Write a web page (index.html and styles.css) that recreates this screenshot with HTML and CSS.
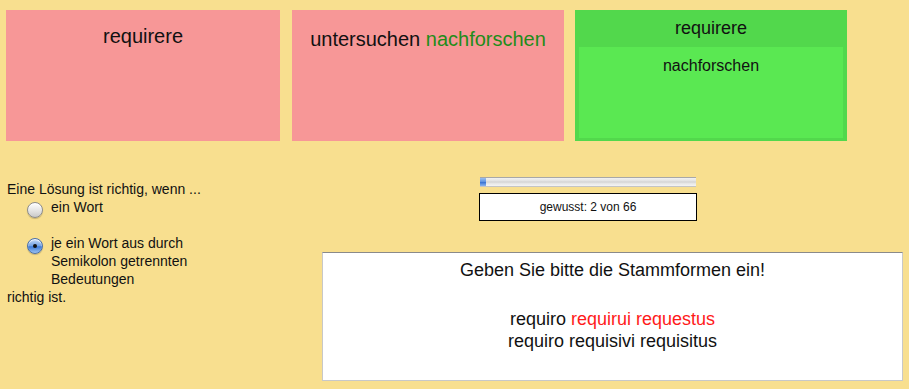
FILE: index.html
```html
<!DOCTYPE html>
<html lang="de">
<head>
    <meta charset="UTF-8">
    <meta name="viewport" content="width=device-width, initial-scale=1.0">
    <title>Stammformen üben</title>
    <link rel="stylesheet" href="styles.css">
</head>
<body>
    <div class="page">
        <div class="cards">
            <div class="card card-wrong">
                <div class="card-word">requirere</div>
            </div>
            <div class="card card-wrong card-answer">
                <div class="card-word">untersuchen <span class="right-word">nachforschen</span></div>
            </div>
            <div class="card card-solution">
                <div class="solution-head">requirere</div>
                <div class="solution-body">nachforschen</div>
            </div>
        </div>

        <div class="lower">
            <div class="options">
                <div class="options-title">Eine Lösung ist richtig, wenn ...</div>
                <label class="option">
                    <input type="radio" name="mode" class="radio">
                    <span class="option-text">ein Wort</span>
                </label>
                <label class="option">
                    <input type="radio" name="mode" class="radio" checked>
                    <span class="option-text">je ein Wort aus durch Semikolon getrennten Bedeutungen</span>
                </label>
                <div class="options-end">richtig ist.</div>
            </div>

            <div class="side">
                <div class="meter">
                    <div class="progress">
                        <div class="progress-fill" style="width: 3%"></div>
                    </div>
                    <div class="counter">gewusst: 2 von 66</div>
                </div>
                <div class="result">
                    <div class="result-title">Geben Sie bitte die Stammformen ein!</div>
                    <div class="result-line">requiro <span class="wrong">requirui requestus</span></div>
                    <div class="result-line">requiro requisivi requisitus</div>
                </div>
            </div>
        </div>
    </div>
</body>
</html>
```

FILE: styles.css
```css
body {
    margin: 0;
    background-color: #f8df8f;
    font-family: "Liberation Sans", Arial, sans-serif;
    color: #111;
}
.page {
    padding: 10px 6px;
}
.cards {
    display: flex;
}
.card {
    height: 131px;
    box-sizing: border-box;
    text-align: center;
}
.card-wrong {
    background-color: #f79797;
    width: 274px;
    padding-top: 15px;
}
.card-answer {
    width: 272px;
    margin-left: 12px;
    padding-top: 18px;
}
.card-word {
    font-size: 20px;
    line-height: 23px;
}
.right-word {
    color: #1f8c1a;
}
.card-solution {
    width: 272px;
    margin-left: 11px;
    background-color: #52d84c;
    padding: 0 4px 3px;
    display: flex;
    flex-direction: column;
}
.solution-head {
    height: 37px;
    box-sizing: border-box;
    padding-top: 8px;
    font-size: 18px;
    line-height: 21px;
}
.solution-body {
    flex: 1;
    background-color: #5ae852;
    padding-top: 9px;
    font-size: 16px;
    line-height: 19px;
}
.lower {
    display: flex;
    margin-top: 36px;
}
.options {
    width: 315px;
    padding: 3px 0 0 1px;
    font-size: 14px;
    line-height: 18px;
}
.option {
    display: flex;
    align-items: flex-start;
    margin-top: 0;
    margin-bottom: 16px;
}
.option:last-of-type {
    margin-bottom: 0;
}
.radio {
    appearance: none;
    -webkit-appearance: none;
    width: 16px;
    height: 16px;
    margin: 4px 8px 0 20px;
    border-radius: 50%;
    border: 1px solid #8c8c8c;
    box-sizing: border-box;
    background: linear-gradient(#ffffff, #e4e4e4 55%, #c9c9c9);
    box-shadow: inset 0 1px 1px rgba(255, 255, 255, 0.9), 0 1px 1px rgba(0, 0, 0, 0.2);
    position: relative;
}
.radio:checked {
    border-color: #4a6fa8;
    background: linear-gradient(#c8dcf6, #6f9fe4 50%, #3b79d6 55%, #9ec4f2);
}
.radio:checked::after {
    content: "";
    position: absolute;
    left: 5px;
    top: 5px;
    width: 4px;
    height: 4px;
    border-radius: 50%;
    background: #111;
}
.option-text {
    max-width: 185px;
}
.side {
    flex: 1;
}
.meter {
    margin-left: 157px;
    width: 218px;
}
.progress {
    margin-left: 1px;
    width: 216px;
    height: 10px;
    box-sizing: border-box;
    border-top: 1px solid #a8a8a8;
    border-bottom: 1px solid #c4c4c4;
    background: linear-gradient(#f2f2f2, #e6e6e6 30%, #d4d4d4 50%, #e8e8e8 70%, #f4f4f4);
}
.progress-fill {
    height: 100%;
    background: linear-gradient(#9cc0f0, #5a8fe0 50%, #3b74d4 55%, #8ab4ee);
}
.counter {
    margin-top: 6px;
    height: 28px;
    box-sizing: border-box;
    border: 1px solid #000;
    background: #fff;
    font-size: 12px;
    line-height: 26px;
    text-align: center;
}
.result {
    margin-top: 31px;
    width: 581px;
    height: 129px;
    box-sizing: border-box;
    background: #fff;
    border: 1px solid #c8c8c8;
    border-top-color: #8a8a8a;
    padding-top: 6px;
    text-align: center;
    font-size: 18px;
    line-height: 22px;
}
.result-title {
    margin-bottom: 27px;
}
.wrong {
    color: #ff1a1a;
}
```
